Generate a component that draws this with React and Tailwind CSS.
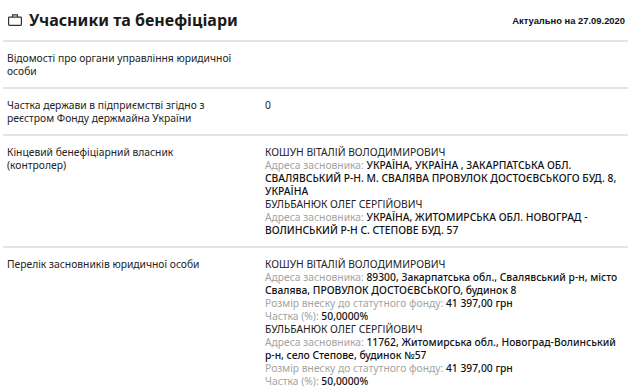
const Gray = ({ children }) => <span className="text-[#a3a3a3] font-normal">{children}</span>

const ROWS = [
  { label: 'Відомості про органи управління юридичної особи', value: null },
  { label: 'Частка держави в підприємстві згідно з реєстром Фонду держмайна України', value: <p>0</p> },
  {
    label: 'Кінцевий бенефіціарний власник (контролер)',
    value: (
      <>
        <p>КОШУН ВІТАЛІЙ ВОЛОДИМИРОВИЧ</p>
        <p className="font-medium text-[#111]"><Gray>Адреса засновника: </Gray>УКРАЇНА, УКРАЇНА , ЗАКАРПАТСЬКА ОБЛ. СВАЛЯВСЬКИЙ Р-Н. М. СВАЛЯВА ПРОВУЛОК ДОСТОЄВСЬКОГО БУД. 8, УКРАЇНА</p>
        <p>БУЛЬБАНЮК ОЛЕГ СЕРГІЙОВИЧ</p>
        <p className="font-medium text-[#111]"><Gray>Адреса засновника: </Gray>УКРАЇНА, ЖИТОМИРСЬКА ОБЛ. НОВОГРАД - ВОЛИНСЬКИЙ Р-Н С. СТЕПОВЕ БУД. 57</p>
      </>
    ),
  },
  {
    label: 'Перелік засновників юридичної особи',
    value: (
      <>
        <p>КОШУН ВІТАЛІЙ ВОЛОДИМИРОВИЧ</p>
        <p className="font-medium text-[#111]"><Gray>Адреса засновника: </Gray>89300, Закарпатська обл., Свалявський р-н, місто Свалява, ПРОВУЛОК ДОСТОЄВСЬКОГО, будинок 8</p>
        <p className="font-medium text-[#111]"><Gray>Розмір внеску до статутного фонду: </Gray>41 397,00 грн</p>
        <p className="font-medium text-[#111]"><Gray>Частка (%): </Gray>50,0000%</p>
        <p>БУЛЬБАНЮК ОЛЕГ СЕРГІЙОВИЧ</p>
        <p className="font-medium text-[#111]"><Gray>Адреса засновника: </Gray>11762, Житомирська обл., Новоград-Волинський р-н, село Степове, будинок №57</p>
        <p className="font-medium text-[#111]"><Gray>Розмір внеску до статутного фонду: </Gray>41 397,00 грн</p>
        <p className="font-medium text-[#111]"><Gray>Частка (%): </Gray>50,0000%</p>
      </>
    ),
  },
]

function BagIcon() {
  return (
    <svg width="14" height="12" viewBox="0 0 14 12" fill="none" stroke="#333" strokeWidth="1.2">
      <rect x="0.6" y="3.1" width="12.8" height="8.3" rx="0.8" />
      <path d="M4.6 3.1V0.9h4.8v2.2" />
    </svg>
  )
}

export default function App() {
  return (
    <div className="bg-white w-[631px] h-[389px] overflow-hidden px-[3px] text-[#222] font-['Noto_Sans',sans-serif]">
      {/* Header */}
      <div className="h-[42px] flex items-center justify-between border-b-2 border-[#e4e4e4] pl-[5px] pr-[3px]">
        <div className="flex items-center gap-[7px]">
          <BagIcon />
          <h2 className="text-[16px] font-bold leading-none text-[#1a1a1a]">Учасники та бенефіціари</h2>
        </div>
        <span className="text-[9.4px] font-bold font-['Liberation_Sans',Arial,sans-serif] text-[#111] mt-[2px]">Актуально на 27.09.2020</span>
      </div>

      {ROWS.map((r, i) => (
        <div key={i} className="flex border-b-2 border-[#e4e4e4] pt-[10px] pb-[9px] pl-[4px] text-[10.3px] leading-[13px]">
          <div className="w-[225px] mr-[33px] shrink-0">{r.label}</div>
          <div className="flex-1 pr-[5px]">{r.value}</div>
        </div>
      ))}
    </div>
  )
}
